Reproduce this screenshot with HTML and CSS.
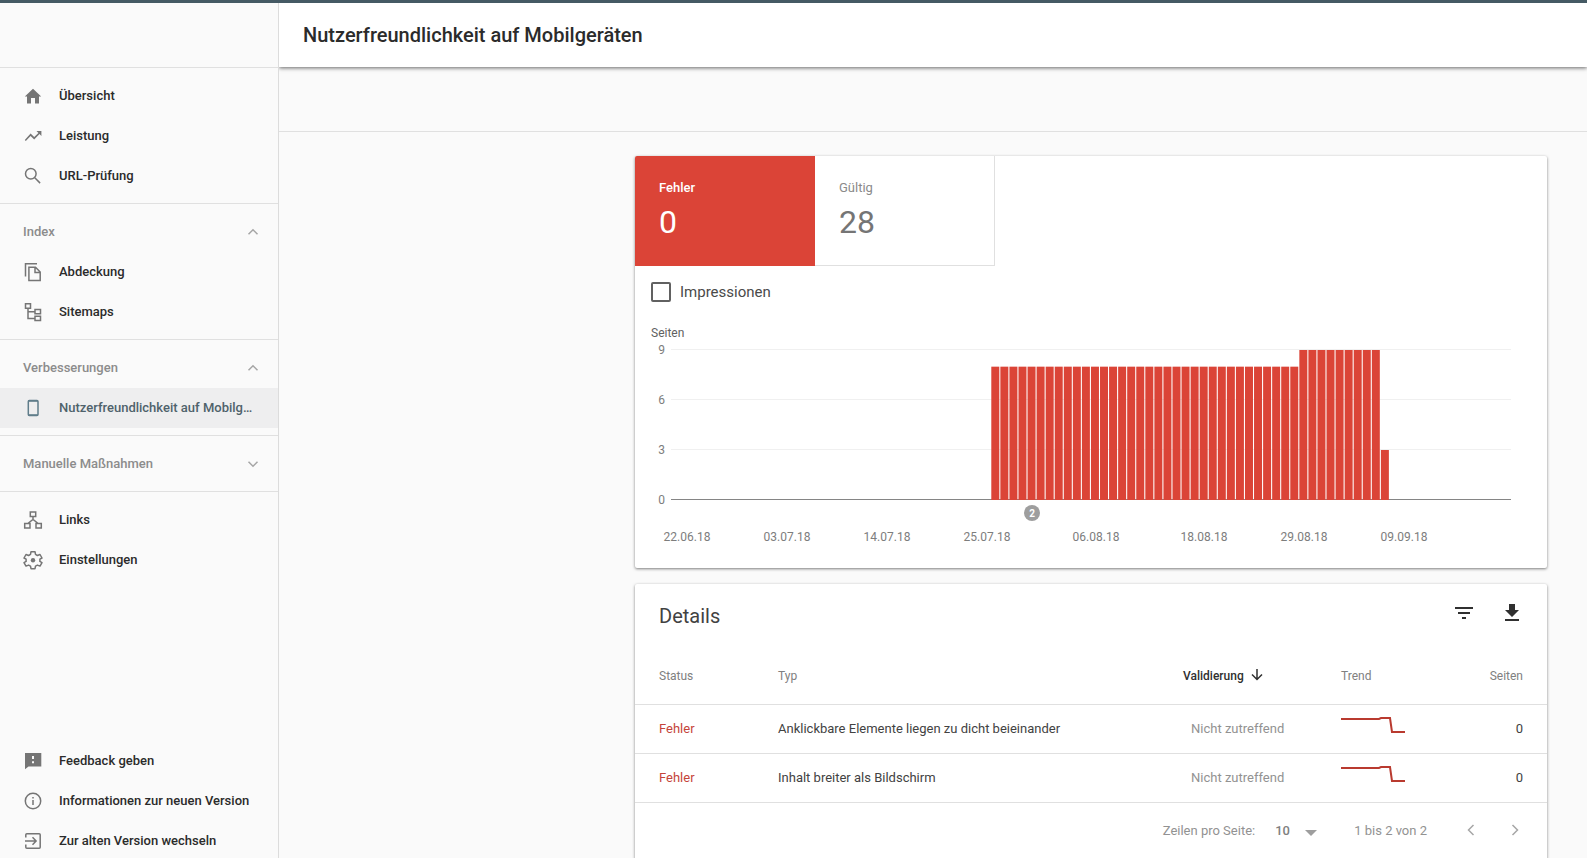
FILE: index.html
```html
<!DOCTYPE html>
<html lang="de">
<head>
<meta charset="utf-8">
<meta name="viewport" content="width=device-width, initial-scale=1">
<title>Nutzerfreundlichkeit auf Mobilgeräten</title>
<link rel="stylesheet" href="styles.css">
</head>
<body>
<div class="topbar"></div>
<div class="shell">
  <aside class="sidebar">
    <div class="sidebar-head"></div>
    <nav class="nav">
      <div class="nav-group">
        <a class="nav-item" href="#"><svg class="icon" viewBox="0 0 24 24"><path class="fill" d="M10 19.500v-5.500h4v5.500h4v-7h2.200L12 4.800l-8.200 7.700H6v7z"/></svg><span class="nav-text">Übersicht</span></a>
        <a class="nav-item" href="#"><svg class="icon" viewBox="0 0 24 24"><path class="fill" d="M15.500 7l1.900 1.900-4.200 4.200-3.600-3.600L3.800 16l1 1.100 4.800-5.200 3.600 3.600 5.300-5.500 1.900 1.900V7z"/></svg><span class="nav-text">Leistung</span></a>
        <a class="nav-item" href="#"><svg class="icon" viewBox="0 0 24 24"><circle class="line" cx="9.800" cy="9.800" r="5.300"/><path class="line" d="M13.800 13.800l5.300 5.300"/></svg><span class="nav-text">URL-Prüfung</span></a>
      </div>
      <div class="nav-group">
        <button class="nav-title" type="button">Index<svg class="chevron" viewBox="0 0 24 24"><path d="M7.500 14.200L12 9.700l4.500 4.500"/></svg></button>
        <a class="nav-item" href="#"><svg class="icon" viewBox="0 0 24 24"><path class="line" d="M4.500 16.500V3.700h11.500M7.900 7.300h6.600l4.700 4.700v8.500H7.900zM14 7.300v5.200h5.200"/></svg><span class="nav-text">Abdeckung</span></a>
        <a class="nav-item" href="#"><svg class="icon" viewBox="0 0 24 24"><path class="line" d="M4.500 3.700h5v4.600h-5zM14 9.500h5.500v4.300H14zM14 16.300h5.500v4.300H14zM7 8.300v10.200h7M7 11.700h7"/></svg><span class="nav-text">Sitemaps</span></a>
      </div>
      <div class="nav-group">
        <button class="nav-title" type="button">Verbesserungen<svg class="chevron" viewBox="0 0 24 24"><path d="M7.500 14.200L12 9.700l4.500 4.500"/></svg></button>
        <a class="nav-item selected" href="#" aria-current="page"><svg class="icon" viewBox="0 0 24 24"><rect class="line" x="7.300" y="4.500" width="9.700" height="15" rx="1"/><path class="line" d="M7.300 5h9.700M7.300 19h9.700"/></svg><span class="nav-text">Nutzerfreundlichkeit auf Mobilg…</span></a>
      </div>
      <div class="nav-group">
        <button class="nav-title" type="button">Manuelle Maßnahmen<svg class="chevron" viewBox="0 0 24 24"><path d="M7.500 9.700l4.500 4.500 4.500-4.500"/></svg></button>
      </div>
      <div class="nav-group">
        <a class="nav-item" href="#"><svg class="icon" viewBox="0 0 24 24"><path class="line" d="M9.300 4h5.400v4.500H9.300zM3.700 15.500h5.300v4.600H3.700zM15 15.500h5.300v4.600H15zM12 8.500v3.500M6.800 15.500l5.200-4 5.200 4"/></svg><span class="nav-text">Links</span></a>
        <a class="nav-item" href="#"><svg class="icon" viewBox="0 0 24 24"><path class="line" stroke-linejoin="round" d="M10 3.700h4l.5 2.700 1.900 1.100 2.600-1 2 3.500-2.100 1.200v2.200l2.100 1.200-2 3.500-2.600-1-1.900 1.100-.5 2.500h-4l-.5-2.500-1.900-1.100-2.600 1-2-3.500 2.100-1.200v-2.200L3 10l2-3.500 2.600 1 1.900-1.100z"/><circle class="fill" cx="12" cy="12.200" r="2.200"/></svg><span class="nav-text">Einstellungen</span></a>
      </div>
    </nav>
    <div class="nav-foot">
      <a class="nav-item" href="#"><svg class="icon" viewBox="0 0 24 24"><path class="fill" fill-rule="evenodd" d="M4 4h16.300v13.500H7.500L4 20.300zM11 7v3h2V7zM11 12.200v2h2v-2z"/></svg><span class="nav-text">Feedback geben</span></a>
      <a class="nav-item" href="#"><svg class="icon" viewBox="0 0 24 24"><circle class="line" cx="12" cy="12" r="7.700"/><path class="line" d="M12 11v5M12 8v1.500"/></svg><span class="nav-text">Informationen zur neuen Version</span></a>
      <a class="nav-item" href="#"><svg class="icon" viewBox="0 0 24 24"><path class="line" d="M4.800 8.500V5.700q0-1 1-1h12.400q1 0 1 1v12.600q0 1-1 1H5.800q-1 0-1-1v-2.800M4 12h10.500M11.500 8.300l3.600 3.700-3.600 3.700"/></svg><span class="nav-text">Zur alten Version wechseln</span></a>
    </div>
  </aside>

  <div class="page">
    <header class="page-head"><h1 class="page-title">Nutzerfreundlichkeit auf Mobilgeräten</h1></header>
    <div class="subbar"></div>
    <main class="content">
      <section class="card">
        <div class="tiles">
          <button class="tile tile-error" type="button"><span class="tile-label">Fehler</span><span class="tile-value">0</span></button>
          <button class="tile" type="button"><span class="tile-label">Gültig</span><span class="tile-value">28</span></button>
        </div>
        <div class="check-row">
          <input class="check" type="checkbox" id="impressions">
          <label for="impressions">Impressionen</label>
        </div>
        <svg class="chart" viewBox="0 0 912 250" role="img" aria-label="Seiten mit Fehlern pro Tag">
          <text class="axis-title" x="16" y="19">Seiten</text>
          <g class="ticks">
            <text x="30" y="36">9</text><text x="30" y="86">6</text><text x="30" y="136">3</text><text x="30" y="186">0</text>
          </g>
          <path class="gridlines" d="M36 31.500H876M36 81.500H876M36 131.500H876"/>
          <path class="baseline" d="M36 181.500H876"/>
          <g class="bars" id="bars"></g>
          <circle class="marker" cx="397" cy="195" r="8"/>
          <text class="marker-text" x="397" y="199">2</text>
          <g class="dates">
            <text x="52" y="223">22.06.18</text><text x="152" y="223">03.07.18</text><text x="252" y="223">14.07.18</text><text x="352" y="223">25.07.18</text><text x="461" y="223">06.08.18</text><text x="569" y="223">18.08.18</text><text x="669" y="223">29.08.18</text><text x="769" y="223">09.09.18</text>
          </g>
        </svg>
      </section>

      <section class="card">
        <div class="details-head">
          <h2 class="details-title">Details</h2>
          <div class="actions">
            <button class="icon-button" type="button" aria-label="Filtern"><svg class="action-icon" viewBox="0 0 24 24"><path d="M10 18h4v-2h-4zM3 6v2h18V6zM6 13h12v-2H6z"/></svg></button>
            <button class="icon-button" type="button" aria-label="Herunterladen"><svg class="action-icon" viewBox="0 0 24 24"><path d="M19 9h-4V3H9v6H5l7 7zM5 18v2h14v-2z"/></svg></button>
          </div>
        </div>
        <table class="table">
          <colgroup><col class="col-status"><col><col class="col-valid"><col class="col-trend"><col class="col-pages"></colgroup>
          <thead>
            <tr><th>Status</th><th>Typ</th><th class="sorted">Validierung<svg class="sort" viewBox="0 0 16 16"><path d="M8 2v10M3 7.500l5 5 5-5"/></svg></th><th>Trend</th><th class="num">Seiten</th></tr>
          </thead>
          <tbody>
            <tr><td class="error">Fehler</td><td>Anklickbare Elemente liegen zu dicht beieinander</td><td class="muted">Nicht zutreffend</td><td><svg class="spark" viewBox="0 0 64 24"><path d="M0 2h38l2-1h9l2 14h13"/></svg></td><td class="num">0</td></tr>
            <tr><td class="error">Fehler</td><td>Inhalt breiter als Bildschirm</td><td class="muted">Nicht zutreffend</td><td><svg class="spark" viewBox="0 0 64 24"><path d="M0 2h38l2-1h9l2 14h13"/></svg></td><td class="num">0</td></tr>
          </tbody>
        </table>
        <div class="pager">
          <label for="rows">Zeilen pro Seite:</label>
          <div class="select-wrap">
            <select class="select" id="rows"><option>10</option><option>25</option><option>50</option></select>
            <svg class="caret" viewBox="0 0 12 6"><path d="M0 0h12L6 6z"/></svg>
          </div>
          <span class="range">1 bis 2 von 2</span>
          <div class="pager-buttons">
            <button class="icon-button" type="button" aria-label="Vorherige Seite"><svg class="chevron" viewBox="0 0 24 24"><path d="M14.500 6l-5 5 5 5"/></svg></button>
            <button class="icon-button" type="button" aria-label="Nächste Seite"><svg class="chevron" viewBox="0 0 24 24"><path d="M9.500 6l5 5-5 5"/></svg></button>
          </div>
        </div>
      </section>
    </main>
  </div>
</div>
<script src="chart.js"></script>
</body>
</html>
```

FILE: styles.css
```css
* { box-sizing: border-box; }

body {
  margin: 0;
  height: 100vh;
  overflow: hidden;
  background: #fafafa;
  color: #2b2b2b;
  font: 13px/20px Roboto, "Liberation Sans", sans-serif;
}

button { border: 0; padding: 0; background: none; font: inherit; color: inherit; text-align: left; cursor: pointer; }
a { color: inherit; text-decoration: none; }
h1, h2 { margin: 0; }

.topbar { height: 3px; background: #455a64; }
.shell { display: flex; height: 100vh; }

/* Sidebar */
.sidebar { display: flex; flex-direction: column; flex: none; width: 279px; border-right: 1px solid #dcdcdc; }
.sidebar-head { flex: none; height: 65px; border-bottom: 1px solid #e0e0e0; }
.nav-group { padding: 8px 0 7px; border-bottom: 1px solid #e0e0e0; }
.nav-group:last-child { border-bottom: 0; }
.nav-item { display: flex; align-items: center; gap: 14px; height: 40px; padding: 0 16px 0 21px; font-weight: 500; }
.nav-text { white-space: nowrap; }
.nav-title { display: flex; align-items: center; justify-content: space-between; width: 100%; height: 40px; padding: 0 13px 0 23px; color: #8c8c8c; font-weight: 500; }
.selected { background: #eeeeef; color: #4f626b; }
.nav-foot { margin-top: auto; }

.icon { flex: none; width: 24px; height: 24px; color: #757575; }
.selected .icon { color: #607d8b; }
.fill { fill: currentColor; }
.line { fill: none; stroke: currentColor; stroke-width: 1.5; }
.chevron { display: block; flex: none; width: 24px; height: 24px; fill: none; stroke: #a6a6a6; stroke-width: 1.5; }

/* Page */
.page { flex: 1; min-width: 0; }
.page-head { position: relative; height: 64px; padding: 20px 24px; background: #fff; box-shadow: 0 1px 4px rgba(0, 0, 0, .6); clip-path: inset(0 0 -8px 0); }
.page-title { font-size: 20px; line-height: 24px; font-weight: 500; }
.subbar { height: 65px; border-bottom: 1px solid #e0e0e0; }
.content { display: flex; flex-direction: column; gap: 16px; max-width: 976px; margin-left: auto; padding: 24px 40px 24px 24px; }
.card { background: #fff; border-radius: 2px; box-shadow: 0 1px 3px rgba(0, 0, 0, .5); }

/* Summary tiles */
.tiles { display: flex; }
.tile { display: flex; flex-direction: column; gap: 4px; width: 180px; height: 110px; padding: 22px 24px; border: solid #e0e0e0; border-width: 0 1px 1px 0; color: #757575; }
.tile-label { color: #8a8a8a; }
.tile-error { border-color: #db4437; border-radius: 2px 0 0; background: #db4437; color: #fff; font-weight: 500; }
.tile-error .tile-label { color: #fff; }
.tile-value { font-size: 32px; line-height: 40px; font-weight: 400; }
.check-row { display: flex; align-items: center; gap: 9px; height: 52px; padding: 0 16px; font-size: 15px; color: #4a4a4a; }
.check { appearance: none; width: 20px; height: 20px; margin: 0; border: 2px solid #616161; border-radius: 2px; }

/* Chart */
.chart { display: block; width: 100%; font-size: 12px; fill: #7d7d7d; }
.axis-title { fill: #616161; }
.ticks { text-anchor: end; }
.dates { text-anchor: middle; }
.gridlines { stroke: #f0f0f0; }
.baseline { stroke: #858585; }
.bars { fill: #db4437; }
.marker { fill: #9e9e9e; }
.marker-text { fill: #fff; font-size: 10px; font-weight: 700; text-anchor: middle; }

/* Details */
.details-head { display: flex; justify-content: space-between; padding: 17px 23px 0 24px; height: 64px; }
.details-title { font-size: 20px; line-height: 30px; font-weight: 400; color: #424242; }
.actions { display: flex; align-items: flex-start; gap: 24px; }
.action-icon { display: block; width: 24px; height: 24px; fill: #303030; }

.table { width: 100%; border-collapse: collapse; table-layout: fixed; }
.col-status { width: 143px; }
.col-valid { width: 158px; }
.col-trend { width: 100px; }
.col-pages { width: 106px; }
.table th { height: 56px; padding: 0; border-bottom: 1px solid #e0e0e0; font-size: 12px; font-weight: 400; color: #808080; text-align: left; }
.table td { height: 49px; padding: 0; border-bottom: 1px solid #e0e0e0; color: #424242; }
.table th:first-child, .table td:first-child { padding-left: 24px; }
.table .num { padding-right: 24px; text-align: right; }
.table .sorted { font-weight: 500; color: #303030; }
.table .error { color: #c5443a; }
.table .muted { padding-left: 8px; color: #929292; }
.sort { width: 16px; height: 16px; margin-left: 5px; vertical-align: -3px; fill: none; stroke: #303030; stroke-width: 1.5; }
.spark { display: block; width: 64px; height: 24px; fill: none; stroke: #b93a2f; stroke-width: 2; }

.pager { display: flex; align-items: center; justify-content: flex-end; height: 57px; padding-right: 20px; color: #929292; }
.select-wrap { position: relative; width: 42px; margin-left: 20px; }
.select { appearance: none; width: 100%; border: 0; padding: 0; background: none; color: #808080; font: 500 13px/20px Roboto, sans-serif; }
.caret { position: absolute; right: 0; top: 9px; width: 12px; height: 6px; fill: #9e9e9e; pointer-events: none; }
.range { margin: 0 32px 0 37px; }
.pager-buttons { display: flex; gap: 20px; }
```

FILE: chart.js
```js
// Pages with errors per day: 34 days at 8, 9 days at 9, then 3.
const values = [...Array(34).fill(8), ...Array(9).fill(9), 3];
const step = 9.06;
const unit = 50 / 3;
const bars = document.getElementById("bars");

values.forEach((value, i) => {
  const bar = document.createElementNS("http://www.w3.org/2000/svg", "rect");
  bar.setAttribute("x", 356.3 + i * step);
  bar.setAttribute("y", 182 - value * unit);
  bar.setAttribute("width", 8);
  bar.setAttribute("height", value * unit);
  bars.appendChild(bar);
});
```
